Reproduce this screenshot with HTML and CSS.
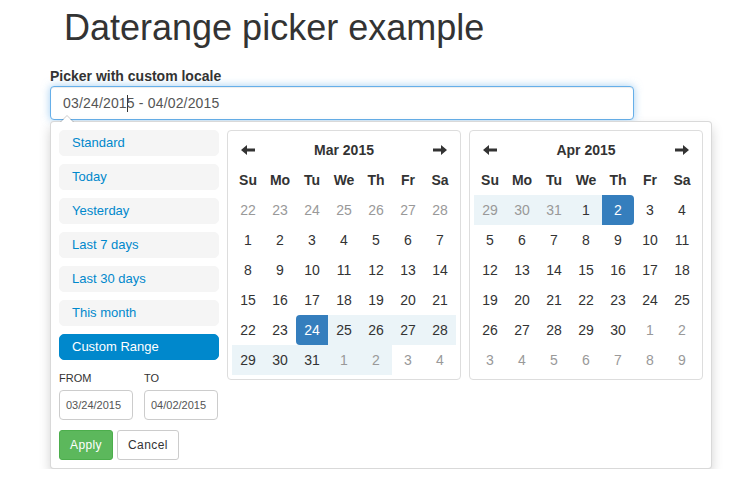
FILE: index.html
```html
<!DOCTYPE html>
<html lang="en">
<head>
<meta charset="utf-8">
<title>Daterange picker example</title>
<link rel="stylesheet" href="styles.css">
</head>
<body>
<div class="page">
  <h1 class="title">Daterange picker example</h1>
  <label class="field-label">Picker with custom locale</label>
  <div class="date-input">03/24/201<span class="caret-bar"></span>5 - 04/02/2015</div>
  <div class="picker">
    <div class="ranges">
      <ul class="range-list">
        <li class="range-item">Standard</li>
        <li class="range-item">Today</li>
        <li class="range-item">Yesterday</li>
        <li class="range-item">Last 7 days</li>
        <li class="range-item">Last 30 days</li>
        <li class="range-item">This month</li>
        <li class="range-item active">Custom Range</li>
      </ul>
      <div class="range-inputs">
        <div class="range-field">
          <span class="mini-label">From</span>
          <div class="input-mini">03/24/2015</div>
        </div>
        <div class="range-field">
          <span class="mini-label">To</span>
          <div class="input-mini">04/02/2015</div>
        </div>
      </div>
      <div class="buttons">
        <button class="btn btn-apply">Apply</button>
        <button class="btn btn-cancel">Cancel</button>
      </div>
    </div>

    <div class="calendar">
      <table class="cal-table">
        <thead>
          <tr>
            <th class="nav"><svg class="arrow" width="14" height="10" viewBox="0 0 14 10"><path d="M0 5 L6 0 V3.4 H14 V6.6 H6 V10 Z"/></svg></th>
            <th colspan="5" class="month">Mar 2015</th>
            <th class="nav"><svg class="arrow" width="14" height="10" viewBox="0 0 14 10"><path d="M14 5 L8 0 V3.4 H0 V6.6 H8 V10 Z"/></svg></th>
          </tr>
          <tr class="dow"><th>Su</th><th>Mo</th><th>Tu</th><th>We</th><th>Th</th><th>Fr</th><th>Sa</th></tr>
        </thead>
        <tbody>
          <tr><td class="off">22</td><td class="off">23</td><td class="off">24</td><td class="off">25</td><td class="off">26</td><td class="off">27</td><td class="off">28</td></tr>
          <tr><td>1</td><td>2</td><td>3</td><td>4</td><td>5</td><td>6</td><td>7</td></tr>
          <tr><td>8</td><td>9</td><td>10</td><td>11</td><td>12</td><td>13</td><td>14</td></tr>
          <tr><td>15</td><td>16</td><td>17</td><td>18</td><td>19</td><td>20</td><td>21</td></tr>
          <tr><td>22</td><td>23</td><td class="active start">24</td><td class="in-range">25</td><td class="in-range">26</td><td class="in-range">27</td><td class="in-range">28</td></tr>
          <tr><td class="in-range">29</td><td class="in-range">30</td><td class="in-range">31</td><td class="in-range off">1</td><td class="in-range off">2</td><td class="off">3</td><td class="off">4</td></tr>
        </tbody>
      </table>
    </div>

    <div class="calendar">
      <table class="cal-table">
        <thead>
          <tr>
            <th class="nav"><svg class="arrow" width="14" height="10" viewBox="0 0 14 10"><path d="M0 5 L6 0 V3.4 H14 V6.6 H6 V10 Z"/></svg></th>
            <th colspan="5" class="month">Apr 2015</th>
            <th class="nav"><svg class="arrow" width="14" height="10" viewBox="0 0 14 10"><path d="M14 5 L8 0 V3.4 H0 V6.6 H8 V10 Z"/></svg></th>
          </tr>
          <tr class="dow"><th>Su</th><th>Mo</th><th>Tu</th><th>We</th><th>Th</th><th>Fr</th><th>Sa</th></tr>
        </thead>
        <tbody>
          <tr><td class="in-range off">29</td><td class="in-range off">30</td><td class="in-range off">31</td><td class="in-range">1</td><td class="active end">2</td><td>3</td><td>4</td></tr>
          <tr><td>5</td><td>6</td><td>7</td><td>8</td><td>9</td><td>10</td><td>11</td></tr>
          <tr><td>12</td><td>13</td><td>14</td><td>15</td><td>16</td><td>17</td><td>18</td></tr>
          <tr><td>19</td><td>20</td><td>21</td><td>22</td><td>23</td><td>24</td><td>25</td></tr>
          <tr><td>26</td><td>27</td><td>28</td><td>29</td><td>30</td><td class="off">1</td><td class="off">2</td></tr>
          <tr><td class="off">3</td><td class="off">4</td><td class="off">5</td><td class="off">6</td><td class="off">7</td><td class="off">8</td><td class="off">9</td></tr>
        </tbody>
      </table>
    </div>
  </div>
</div>
</body>
</html>
```

FILE: styles.css
```css
* { box-sizing: border-box; }

html, body {
  margin: 0;
  padding: 0;
  background: #fff;
}

body {
  font-family: "Liberation Sans", Arial, Helvetica, sans-serif;
  font-size: 14px;
  line-height: 20px;
  color: #333;
}

.page {
  padding: 8px 0 0 50px;
}

.title {
  margin: 0 0 18px 0;
  padding-left: 14px;
  font-size: 36px;
  font-weight: 400;
  line-height: 1.1;
  color: #333;
}

.field-label {
  display: block;
  font-weight: 700;
  font-size: 14px;
  line-height: 20px;
  margin: 0;
}

.date-input {
  width: 584px;
  height: 34px;
  padding: 6px 12px;
  font-size: 14px;
  line-height: 20px;
  letter-spacing: 0.17px;
  color: #555;
  background: #fff;
  border: 1px solid #66afe9;
  border-radius: 4px;
  box-shadow: inset 0 1px 1px rgba(0, 0, 0, .075), 0 0 8px rgba(102, 175, 233, .6);
  white-space: nowrap;
}

.caret-bar {
  display: inline-block;
  width: 1px;
  height: 17px;
  margin-right: -1px;
  background: #333;
  vertical-align: -4px;
}

.picker {
  position: relative;
  display: flex;
  align-items: flex-start;
  width: max-content;
  margin-top: 1px;
  padding: 4px;
  background: #fff;
  border: 1px solid rgba(0, 0, 0, .15);
  border-radius: 4px;
  box-shadow: 0 6px 12px rgba(0, 0, 0, .175);
}

.picker::before {
  content: "";
  position: absolute;
  top: -7px;
  left: 9px;
  border-left: 7px solid transparent;
  border-right: 7px solid transparent;
  border-bottom: 7px solid rgba(0, 0, 0, .2);
}

.picker::after {
  content: "";
  position: absolute;
  top: -6px;
  left: 10px;
  border-left: 6px solid transparent;
  border-right: 6px solid transparent;
  border-bottom: 6px solid #fff;
}

.ranges {
  width: 160px;
  margin: 4px;
}

.range-list {
  list-style: none;
  margin: 0;
  padding: 0;
}

.range-item {
  font-size: 13px;
  line-height: 18px;
  background: #f5f5f5;
  border: 1px solid #f5f5f5;
  color: #08c;
  padding: 3px 12px;
  margin-bottom: 8px;
  border-radius: 5px;
}

.range-item.active {
  background: #08c;
  border-color: #08c;
  color: #fff;
}

.range-inputs {
  display: flex;
  gap: 11px;
}

.range-field {
  width: 74px;
}

.mini-label {
  display: block;
  height: 22px;
  line-height: 20px;
  font-size: 11px;
  text-transform: uppercase;
  color: #333;
}

.input-mini {
  width: 74px;
  height: 30px;
  line-height: 28px;
  padding: 0 6px;
  font-size: 11px;
  color: #555;
  background: #fff;
  border: 1px solid #ccc;
  border-radius: 4px;
  margin-bottom: 10px;
}

.buttons {
  display: flex;
  gap: 4px;
}

.btn {
  font-family: inherit;
  font-size: 12px;
  line-height: 18px;
  letter-spacing: 0.4px;
  height: 30px;
  padding: 5px 10px;
  border-radius: 3px;
  border: 1px solid #ccc;
  margin: 0;
}

.btn-apply {
  background: #5cb85c;
  border-color: #4cae4c;
  color: #fff;
}

.btn-cancel {
  background: #fff;
  border-color: #ccc;
  color: #333;
}

.calendar {
  width: 234px;
  margin: 4px;
  padding: 4px;
  border: 1px solid #ddd;
  border-radius: 4px;
  background: #fff;
}

.cal-table {
  width: 224px;
  table-layout: fixed;
  border-collapse: collapse;
  border-spacing: 0;
}

.cal-table th,
.cal-table td {
  width: 32px;
  height: 30px;
  padding: 0;
  line-height: 30px;
  text-align: center;
  white-space: nowrap;
  font-size: 14px;
  color: #333;
}

.cal-table th {
  font-weight: 700;
}

.cal-table .month {
  width: auto;
}

.arrow {
  display: inline-block;
  vertical-align: middle;
  fill: #333;
  margin-top: -2px;
}

.cal-table td.off {
  color: #999;
}

.cal-table td.in-range {
  background: #ebf4f8;
  border-radius: 0;
}

.cal-table td.active {
  background: #357ebd;
  color: #fff;
}

.cal-table td.start {
  border-radius: 4px 0 0 4px;
}

.cal-table td.end {
  border-radius: 0 4px 4px 0;
}
```
